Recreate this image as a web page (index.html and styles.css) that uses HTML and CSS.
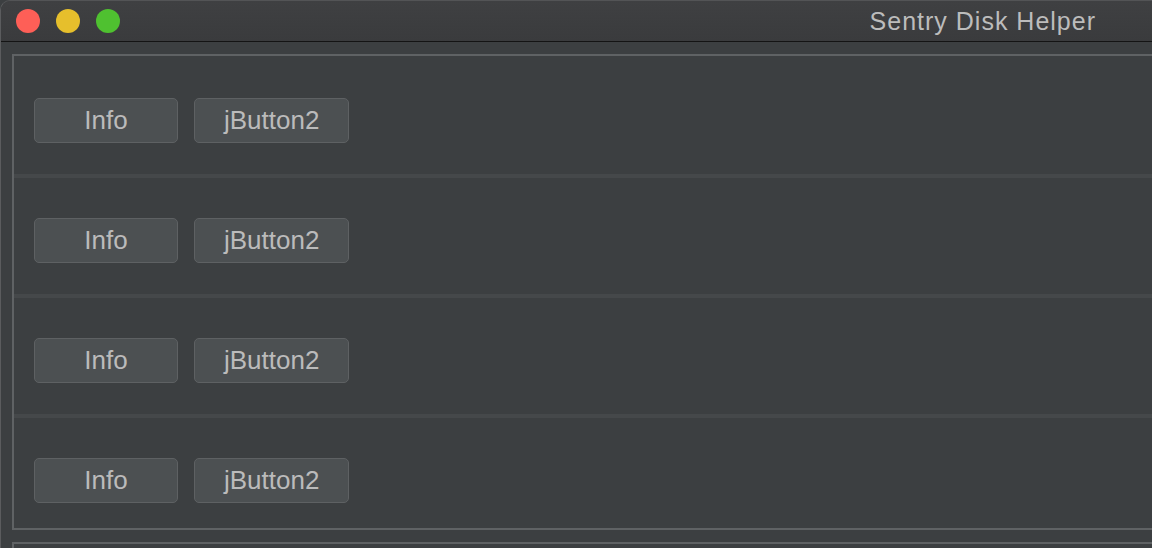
FILE: index.html
```html
<!DOCTYPE html>
<html lang="en">
<head>
<meta charset="utf-8">
<title>Sentry Disk Helper</title>
<link rel="stylesheet" href="styles.css">
</head>
<body>
<div class="window">
  <div class="titlebar">
    <div class="lights">
      <span class="light red"></span>
      <span class="light yellow"></span>
      <span class="light green"></span>
    </div>
    <div class="title">Sentry Disk Helper</div>
  </div>
  <div class="content">
    <div class="panel">
      <div class="row first">
        <button class="btn info">Info</button>
        <button class="btn">jButton2</button>
      </div>
      <div class="row">
        <button class="btn info">Info</button>
        <button class="btn">jButton2</button>
      </div>
      <div class="row">
        <button class="btn info">Info</button>
        <button class="btn">jButton2</button>
      </div>
      <div class="row last">
        <button class="btn info">Info</button>
        <button class="btn">jButton2</button>
      </div>
    </div>
    <div class="panel next"></div>
  </div>
</div>
</body>
</html>
```

FILE: styles.css
```css
html, body {
  margin: 0;
  padding: 0;
  width: 1152px;
  height: 548px;
  overflow: hidden;
  background: #3c3f41;
  font-family: "Liberation Sans", Arial, sans-serif;
}

.window {
  width: 1152px;
  height: 548px;
  box-sizing: border-box;
  border-left: 1px solid #5b5c5e;
  border-top: 1px solid #535456;
  border-top-left-radius: 10px;
  background: #3c3f41;
  overflow: hidden;
}

.titlebar {
  height: 40px;
  display: flex;
  align-items: center;
  background: linear-gradient(#3f4042, #3a3b3d);
  border-bottom: 1px solid #141414;
}

.lights {
  display: flex;
  gap: 16px;
  padding-left: 15px;
}

.light {
  width: 24px;
  height: 24px;
  border-radius: 50%;
  display: block;
}

.red { background: #fe5f57; }
.yellow { background: #e6bf2c; }
.green { background: #4fc130; }

.title {
  margin-left: auto;
  margin-right: 56px;
  color: #bcbcbc;
  font-size: 25px;
  letter-spacing: 1px;
}

.content {
  padding: 12px 0 0 11px;
  overflow: hidden;
}

.panel {
  width: 1200px;
  border: 2px solid #5f6264;
  border-right: none;
  background: #3c3f41;
}

.panel.next {
  margin-top: 12px;
  height: 20px;
  border-bottom: none;
}

.row {
  display: flex;
  gap: 16px;
  align-items: flex-start;
  padding: 40px 0 0 20px;
  height: 76px;
  border-top: 4px solid #45484a;
}

.row.first {
  border-top: none;
  padding-top: 42px;
}

.row.last {
  height: 70px;
}

.btn {
  height: 45px;
  box-sizing: border-box;
  padding: 0 29px;
  background: #4c5052;
  border: 1px solid #5e6163;
  border-radius: 5px;
  color: #bbbbbb;
  font-family: "Liberation Sans", Arial, sans-serif;
  font-size: 26px;
  line-height: 43px;
}

.btn.info {
  width: 144px;
  padding: 0;
}
```
